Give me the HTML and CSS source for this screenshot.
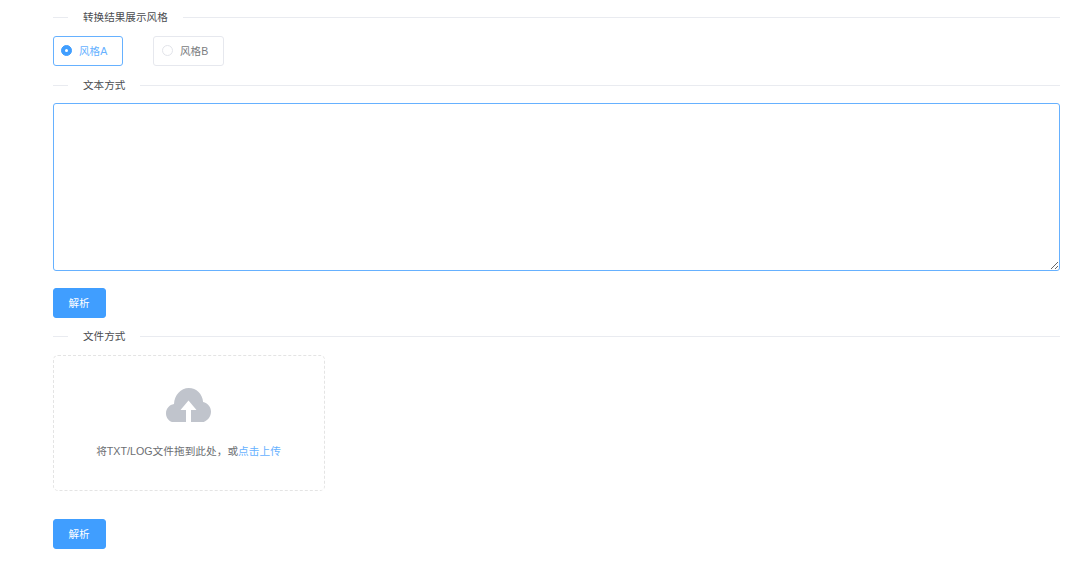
FILE: index.html
```html
<!DOCTYPE html>
<html lang="zh">
<head>
<meta charset="utf-8">
<title>转换</title>
<link rel="stylesheet" href="styles.css">
</head>
<body>
<main class="page">
  <div class="divider first"><span class="divider-text">转换结果展示风格</span></div>
  <div class="radio-group">
    <label class="radio checked"><span class="radio-dot"></span><span>风格A</span></label>
    <label class="radio radio-b"><span class="radio-dot"></span><span>风格B</span></label>
  </div>
  <div class="divider after-radio"><span class="divider-text">文本方式</span></div>
  <textarea class="text-input" aria-label="文本方式"></textarea>
  <button class="btn btn-text" type="button">解析</button>
  <div class="divider after-btn"><span class="divider-text">文件方式</span></div>
  <div class="upload">
    <svg class="upload-icon" viewBox="0 0 45 34" width="45" height="34" aria-hidden="true">
      <path fill="#c0c4cc" d="M6 34C2.4 32.6 0 29.2 0 25.4c0-4.7 3.4-8.6 8-9.3C8.4 7.2 14.800 0 22.800 0c7.600 0 13.700 6.200 14.300 13.900 4.500.9 7.900 4.900 7.900 9.700 0 4.800-3 8.900-7.300 10.400H25V22h5.500L22.500 12.500 14.500 22H20v12z"/>
    </svg>
    <div class="upload-text">将TXT/LOG文件拖到此处，或<em class="upload-link">点击上传</em></div>
  </div>
  <button class="btn btn-file" type="button">解析</button>
</main>
</body>
</html>
```
FILE: styles.css
```css
* { box-sizing: border-box; }
html, body { margin: 0; padding: 0; background: #fff; }
body {
  font-family: "Liberation Sans", "Noto Sans CJK SC", sans-serif;
  color: #606266;
  overflow: hidden;
}
.page {
  display: flex;
  flex-direction: column;
  align-items: flex-start;
  height: 565px;
  padding: 7px 20px 0 53px;
}
.divider {
  display: flex;
  align-items: center;
  width: 100%;
  height: 20px;
  font-size: 10.6px;
  color: #4a4c50;
}
.divider::before {
  content: "";
  flex: 0 0 15px;
  height: 1px;
  background: #e9ebf0;
}
.divider::after {
  content: "";
  flex: 1;
  height: 1px;
  background: #e9ebf0;
}
.divider-text { padding: 0 15px 2px; white-space: nowrap; }
.after-radio { margin-top: 9px; }
.after-btn { margin-top: 8px; }
.radio-group {
  display: flex;
  gap: 30px;
  margin-top: 9px;
}
.radio {
  display: flex;
  align-items: center;
  gap: 7px;
  width: 70px;
  height: 30px;
  padding: 0 0 2px 7px;
  border: 1px solid #e6e8ee;
  border-radius: 3px;
  font-size: 10.6px;
  color: #7a7c80;
}
.radio-b { width: 71px; padding-left: 8px; }
.radio-dot {
  position: relative;
  width: 11px;
  height: 11px;
  border: 1px solid #e2e4ea;
  border-radius: 50%;
  background: #fff;
}
.radio.checked { border-color: #66b1ff; color: #66b1ff; }
.radio.checked .radio-dot { border-color: #409eff; background: #409eff; }
.radio.checked .radio-dot::after {
  content: "";
  position: absolute;
  top: 50%;
  left: 50%;
  width: 3px;
  height: 3px;
  margin: -1.500px 0 0 -1.500px;
  border-radius: 50%;
  background: #fff;
}
.text-input {
  display: block;
  width: 100%;
  height: 168px;
  margin-top: 8px;
  padding: 4px 11px;
  border: 1px solid #66b1ff;
  border-radius: 3px;
  outline: 0;
  font: inherit;
  font-size: 10.6px;
  color: #606266;
  background: #fff;
  resize: vertical;
}
.btn {
  width: 53px;
  height: 30px;
  padding: 0 1px 2px 0;
  border: 1px solid #409eff;
  border-radius: 3px;
  background: #409eff;
  color: #fff;
  font-family: inherit;
  font-size: 10.500px;
}
.btn-text { margin-top: 17px; }
.btn-file { margin-top: 28px; }
.upload {
  display: flex;
  flex-direction: column;
  align-items: center;
  width: 272px;
  height: 136px;
  margin-top: 9px;
  padding-top: 32px;
  border: 1px dashed #e4e4e4;
  border-radius: 5px;
  background: #fff;
}
.upload-icon { display: block; margin-right: 2px; }
.upload-text {
  margin: 22px 1px 0 0;
  font-size: 10.700px;
  line-height: 14px;
  color: #6c6e72;
  white-space: nowrap;
}
.upload-link { font-style: normal; color: #66b1ff; }
```
